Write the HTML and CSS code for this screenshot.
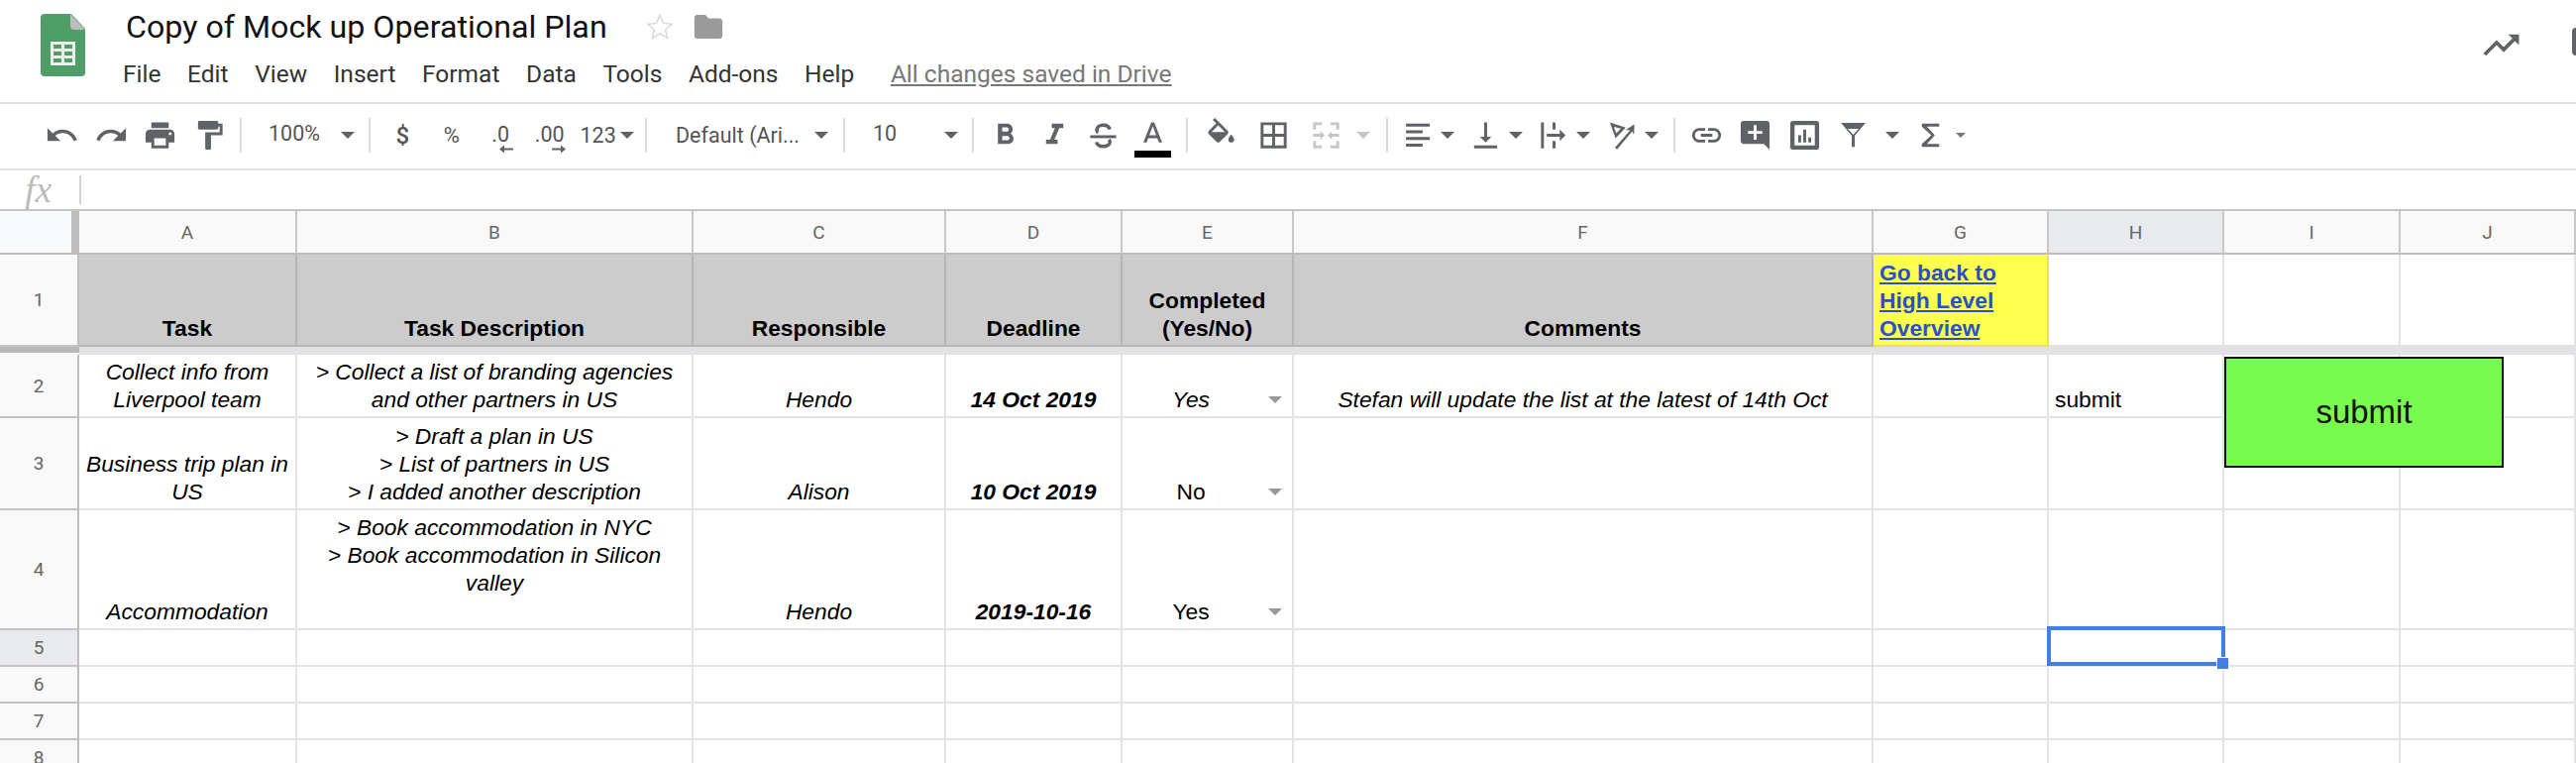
FILE: index.html
```html
<!DOCTYPE html>
<html lang="en">
<head>
<meta charset="utf-8">
<title>Copy of Mock up Operational Plan</title>
<link rel="stylesheet" href="styles.css">
</head>
<body>
<header class="appbar">
  <svg class="logo" viewBox="0 0 45 63"><path fill="#4f9e68" d="M4 0h27l14 15v44a4 4 0 0 1-4 4H4a4 4 0 0 1-4-4V4a4 4 0 0 1 4-4z"/><path fill="#bdbdbd" d="M30 0l15 16H34a4 4 0 0 1-4-4z"/><rect fill="#eeeeee" x="10" y="28" width="25" height="24"/><path fill="#4f9e68" d="M13 31h8v4h-8zM24 31h8v4h-8zM13 38h8v4h-8zM24 38h8v4h-8zM13 45h8v4h-8zM24 45h8v4h-8z"/></svg>
  <div class="titles">
    <div class="titlerow">
      <span class="doc-title">Copy of Mock up Operational Plan</span>
      <svg class="star" viewBox="0 0 24 24"><path fill="none" stroke="#d8d8d8" stroke-width="1.100" d="M12 3.300l2.600 6 6.500.6-4.900 4.300 1.500 6.400-5.700-3.400-5.700 3.400 1.500-6.400-4.900-4.300 6.500-.6z"/></svg>
      <svg class="folder" viewBox="0 0 24 24"><path fill="#9a9a9a" d="M10 3.500H4c-1.100 0-2 .9-2 2v13c0 1.100.9 2 2 2h16c1.100 0 2-.9 2-2V8c0-1.100-.9-2-2-2h-8l-2-2.500z"/></svg>
    </div>
    <nav class="menu">
      <span>File</span><span>Edit</span><span>View</span><span>Insert</span><span>Format</span><span>Data</span><span>Tools</span><span>Add-ons</span><span>Help</span>
      <span class="saved">All changes saved in Drive</span>
    </nav>
  </div>
  <svg class="trend" viewBox="0 0 24 24"><path fill="#5f6368" d="M16 6l2.290 2.290-4.880 4.880-4-4L2 16.590 3.410 18l6-6 4 4 6.300-6.290L22 12V6z"/></svg>
  <div class="stub"></div>
</header>

<div class="toolbar">
  <div class="tg g1">
    <span class="tb"><svg viewBox="0 0 24 24"><path d="M12.500 8c-2.650 0-5.050.99-6.900 2.600L2 7v9h9l-3.620-3.620c1.390-1.160 3.160-1.880 5.120-1.880 3.540 0 6.550 2.310 7.600 5.500l2.370-.78C21.080 11.030 17.150 8 12.500 8z"/></svg></span>
    <span class="tb"><svg viewBox="0 0 24 24"><path d="M18.400 10.600C16.550 8.990 14.150 8 11.500 8c-4.650 0-8.580 3.030-9.960 7.220L3.900 16c1.050-3.190 4.050-5.500 7.600-5.500 1.950 0 3.730.72 5.120 1.880L13 16h9V7l-3.600 3.600z"/></svg></span>
    <span class="tb"><svg viewBox="0 0 24 24"><path d="M19 8H5c-1.660 0-3 1.340-3 3v6h4v4h12v-4h4v-6c0-1.660-1.340-3-3-3zm-3 11H8v-5h8v5zm3-7c-.55 0-1-.45-1-1s.45-1 1-1 1 .45 1 1-.45 1-1 1zm-1-9H6v4h12V3z"/></svg></span>
    <span class="tb"><svg viewBox="0 0 24 24"><path d="M18 4V3c0-.55-.45-1-1-1H5c-.55 0-1 .45-1 1v4c0 .55.45 1 1 1h12c.55 0 1-.45 1-1V6h1v4H9v11c0 .55.45 1 1 1h2c.55 0 1-.45 1-1v-9h8V4h-3z"/></svg></span>
  </div>
  <i class="tsep"></i>
  <div class="tg g2"><span class="ttext up">100%</span><i class="arrow push"></i></div>
  <i class="tsep"></i>
  <div class="tg g3">
    <span class="tb ttext strong">$</span>
    <span class="tb ttext pct">%</span>
    <span class="tb stack"><span class="ttext">.0</span><svg class="dec dec1" viewBox="0 0 14 8"><path d="M14 3H5V0L0 4l5 4V5h9z"/></svg></span>
    <span class="tb stack"><span class="ttext">.00</span><svg class="dec dec2" viewBox="0 0 14 8"><path d="M0 3h9V0l5 4-5 4V5H0z"/></svg></span>
    <span class="ttext num">123</span><i class="arrow gap4"></i>
  </div>
  <i class="tsep"></i>
  <div class="tg g4"><span class="ttext">Default (Ari...</span><i class="arrow push"></i></div>
  <i class="tsep"></i>
  <div class="tg g5"><span class="ttext up">10</span><i class="arrow push"></i></div>
  <i class="tsep"></i>
  <div class="tg g6">
    <span class="tb"><svg viewBox="0 0 24 24"><path d="M15.600 10.790c.97-.67 1.650-1.770 1.650-2.790 0-2.260-1.750-4-4-4H7v14h7.040c2.090 0 3.710-1.700 3.710-3.790 0-1.520-.86-2.820-2.150-3.420zM10 6.500h3c.83 0 1.500.67 1.500 1.500s-.67 1.500-1.500 1.500h-3v-3zm3.500 9H10v-3h3.500c.83 0 1.500.67 1.500 1.500s-.67 1.500-1.500 1.500z"/></svg></span>
    <span class="tb"><svg viewBox="0 0 24 24"><path d="M10 4v3h2.210l-3.420 8H6v3h8v-3h-2.210l3.420-8H18V4z"/></svg></span>
    <span class="tb"><svg viewBox="0 0 24 24"><path class="line" d="M16.500 8c-.4-1.800-2.200-3-4.500-3-2.600 0-4.500 1.300-4.500 3.200 0 .8.300 1.500 1 2M16 15c.4.500.6 1 .6 1.600 0 1.900-2 3.100-4.600 3.100-2.500 0-4.300-1.200-4.700-3"/><path d="M3 12h18v2H3z"/></svg></span>
    <span class="tb"><svg viewBox="0 0 24 24"><path d="M11 3L5.500 17h2.250l1.120-3h6.250l1.120 3h2.250L13 3h-2zm-1.380 9L12 5.670 14.380 12H9.620z"/></svg><i class="colorbar"></i></span>
  </div>
  <i class="tsep"></i>
  <div class="tg g7">
    <span class="tb wide"><svg viewBox="0 0 24 24"><path d="M16.560 8.940L7.620 0 6.210 1.410l2.380 2.380-5.150 5.150c-.59.59-.59 1.540 0 2.120l5.500 5.500c.29.29.68.44 1.060.44s.77-.15 1.060-.44l5.500-5.500c.59-.58.59-1.530 0-2.120zM5.210 10L10 5.210 14.790 10H5.210zM19 11.500s-2 2.170-2 3.500c0 1.100.9 2 2 2s2-.9 2-2c0-1.330-2-3.500-2-3.500z"/><path d="M4 10h12l-6 6z"/></svg></span>
    <span class="tb wide"><svg viewBox="0 0 24 24"><path d="M3 3v18h18V3H3zm8 16H5v-6h6v6zm0-8H5V5h6v6zm8 8h-6v-6h6v6zm0-8h-6V5h6v6z"/></svg></span>
    <span class="tb wide off"><svg viewBox="0 0 24 24"><path d="M3 3h6v2H5v3H3zM3 16h2v3h4v2H3zM21 3h-6v2h4v3h2zM21 16h-2v3h-4v2h6zM3 11h5V9l3 3-3 3v-2H3zM21 11h-5V9l-3 3 3 3v-2h5z"/></svg></span>
    <i class="arrow off push"></i>
  </div>
  <i class="tsep"></i>
  <div class="tg g8">
    <span class="pair"><span class="tb nar"><svg viewBox="0 0 24 24"><path d="M3.500 4h16.500v2H3.500zM3.500 8.600H15v2H3.500zM3.500 13.200h16.500v2H3.500zM3.500 17.800H15v2H3.500z"/></svg></span><i class="arrow"></i></span>
    <span class="pair"><span class="tb nar"><svg viewBox="0 0 24 24"><path d="M16 13h-3V3h-2v10H8l4 4 4-4zM4 19v2h16v-2H4z"/></svg></span><i class="arrow"></i></span>
    <span class="pair"><span class="tb nar"><svg viewBox="0 0 24 24"><path d="M3 3h2v18H3zM11 3h2v5h-2zM11 16h2v5h-2zM7 11h9V8l4 4-4 4v-3H7z"/></svg></span><i class="arrow"></i></span>
    <span class="pair"><span class="tb nar"><svg viewBox="0 0 24 24"><path d="M4 3l11 3.600-7 7.400zM6.800 6.200l1.700 4.400 3.100-3.200z" fill-rule="evenodd"/><path d="M7.500 20.500L18 8.500l-3-.3 6-3.700-.3 7.200-1.200-2.400L9 21.700z"/></svg></span><i class="arrow"></i></span>
  </div>
  <i class="tsep"></i>
  <div class="tg g9">
    <span class="tb"><svg viewBox="0 0 24 24"><path d="M3.900 12c0-1.710 1.390-3.100 3.100-3.100h4V7H7c-2.760 0-5 2.240-5 5s2.240 5 5 5h4v-1.900H7c-1.710 0-3.100-1.390-3.100-3.100zM8 13h8v-2H8v2zm9-6h-4v1.900h4c1.710 0 3.100 1.390 3.100 3.100s-1.390 3.100-3.100 3.100h-4V17h4c2.760 0 5-2.240 5-5s-2.240-5-5-5z"/></svg></span>
    <span class="tb"><svg viewBox="0 0 24 24"><path d="M21.990 4c0-1.100-.89-2-1.990-2H4c-1.100 0-2 .9-2 2v12c0 1.100.9 2 2 2h14l4 4-.01-18zM17 11h-4v4h-2v-4H7V9h4V5h2v4h4v2z"/></svg></span>
    <span class="tb"><svg viewBox="0 0 24 24"><path fill-rule="evenodd" d="M4 2h16a2 2 0 0 1 2 2v16a2 2 0 0 1-2 2H4a2 2 0 0 1-2-2V4a2 2 0 0 1 2-2zM5 5v14h14V5zM7.500 12H9.500v5H7.500zM11 8h2v9h-2zM14.500 13.500h2V17h-2z"/></svg></span>
    <span class="tb"><svg viewBox="0 0 24 24"><path fill-rule="evenodd" d="M3.500 3.500h17l-7.500 8.800v7.700h-2v-7.700zM8.300 7.500h7.400L12 11.700z"/></svg></span>
    <span class="arrowcell"><i class="arrow"></i></span>
    <span class="tb"><svg viewBox="0 0 24 24"><path d="M18 4H6v2l6.500 6L6 18v2h12v-2H9.500l5.500-6-5.500-6H18z"/></svg></span>
    <i class="arrow tiny"></i>
  </div>
</div>

<div class="formula"><span class="fx">fx</span><i class="fsep"></i></div>

<main class="sheet">
  <div class="corner"></div>
  <div class="colh">A</div><div class="colh">B</div><div class="colh">C</div><div class="colh">D</div><div class="colh">E</div><div class="colh">F</div><div class="colh">G</div><div class="colh active">H</div><div class="colh">I</div><div class="colh">J</div>

  <div class="rowh">1</div>
  <div class="c hd">Task</div>
  <div class="c hd">Task Description</div>
  <div class="c hd">Responsible</div>
  <div class="c hd">Deadline</div>
  <div class="c hd">Completed<br>(Yes/No)</div>
  <div class="c hd">Comments</div>
  <div class="c back"><a href="#">Go back to High Level Overview</a></div>
  <div class="c"></div><div class="c"></div><div class="c"></div>

  <div class="freeze-h"></div><div class="freeze"></div>

  <div class="rowh">2</div>
  <div class="c it">Collect info from Liverpool team</div>
  <div class="c it">&gt; Collect a list of branding agencies and other partners in US</div>
  <div class="c it">Hendo</div>
  <div class="c date">14 Oct 2019</div>
  <div class="c pick it">Yes<i class="drop"></i></div>
  <div class="c it">Stefan will update the list at the latest of 14th Oct</div>
  <div class="c"></div>
  <div class="c plain">submit</div>
  <div class="c"></div><div class="c"></div>

  <div class="rowh">3</div>
  <div class="c it">Business trip plan in US</div>
  <div class="c it">&gt; Draft a plan in US<br>&gt; List of partners in US<br>&gt; I added another description</div>
  <div class="c it">Alison</div>
  <div class="c date">10 Oct 2019</div>
  <div class="c pick">No<i class="drop"></i></div>
  <div class="c"></div><div class="c"></div><div class="c"></div><div class="c"></div><div class="c"></div>

  <div class="rowh">4</div>
  <div class="c it">Accommodation</div>
  <div class="c it top">&gt; Book accommodation in NYC<br>&gt; Book accommodation in Silicon valley</div>
  <div class="c it">Hendo</div>
  <div class="c date">2019-10-16</div>
  <div class="c pick">Yes<i class="drop"></i></div>
  <div class="c"></div><div class="c"></div><div class="c"></div><div class="c"></div><div class="c"></div>

  <div class="rowh active">5</div>
  <div class="c"></div><div class="c"></div><div class="c"></div><div class="c"></div><div class="c"></div><div class="c"></div><div class="c"></div><div class="c"></div><div class="c"></div><div class="c"></div>
  <div class="rowh">6</div>
  <div class="c"></div><div class="c"></div><div class="c"></div><div class="c"></div><div class="c"></div><div class="c"></div><div class="c"></div><div class="c"></div><div class="c"></div><div class="c"></div>
  <div class="rowh">7</div>
  <div class="c"></div><div class="c"></div><div class="c"></div><div class="c"></div><div class="c"></div><div class="c"></div><div class="c"></div><div class="c"></div><div class="c"></div><div class="c"></div>
  <div class="rowh">8</div>
  <div class="c"></div><div class="c"></div><div class="c"></div><div class="c"></div><div class="c"></div><div class="c"></div><div class="c"></div><div class="c"></div><div class="c"></div><div class="c"></div>

  <div class="drawing">submit</div>
  <div class="selection"><i class="handle"></i></div>
</main>
</body>
</html>
```
FILE: styles.css
```css
* { box-sizing: border-box; }
html, body { margin: 0; height: 770px; overflow: hidden; background: #fff; }
body { font-family: "Liberation Sans", Arial, sans-serif; color: #000; }

/* App bar */
.appbar { display: flex; align-items: flex-start; height: 105px; padding-left: 41px; border-bottom: 2px solid #e0e1e5; }
.logo { width: 45px; height: 63px; margin-top: 14px; flex: none; }
.titles { margin-left: 39px; padding-top: 9px; }
.titlerow { display: flex; align-items: center; height: 36px; }
.doc-title { font: 400 32.2px/36px Roboto, sans-serif; color: #111; margin-left: 2px; }
.star { width: 32px; height: 32px; margin-left: 37px; }
.folder { width: 34px; height: 34px; margin-left: 16px; }
.menu { display: flex; gap: 26.6px; margin: 15px 0 0 -1px; font: 400 24.5px/30px Roboto, sans-serif; color: #333; }
.saved { color: #777; text-decoration: underline; margin-left: 10px; }
.trend { width: 43px; height: 43px; margin: 24px 0 0 auto; flex: none; }
.stub { width: 4px; height: 28px; margin: 28px 0 0 50px; flex: none; background: #5f6368; border-radius: 4px 0 0 4px; }

/* Toolbar */
.toolbar { display: flex; align-items: center; height: 67px; padding-left: 38px; padding-bottom: 2px; border-bottom: 2px solid #e0e1e5; }
.tg { display: flex; align-items: center; flex: none; height: 100%; }
.tsep { flex: none; width: 2px; height: 35px; background: #dcdde0; }
.g1 { width: 204px; }
.g2 { width: 128px; padding: 0 14px 0 27px; }
.g3 { width: 277px; padding-left: 7.5px; }
.g4 { width: 198px; padding: 0 15px 0 29px; }
.g5 { width: 128px; padding: 0 14px 0 28px; }
.g6 { width: 214px; padding-left: 7px; }
.g7 { width: 200px; padding: 0 16px 0 6.5px; }
.g8 { width: 288px; padding-left: 8.5px; }
.g9 { padding-left: 6.5px; }
.tb { position: relative; flex: none; width: 49.5px; display: flex; align-items: center; justify-content: center; }
.tb svg { width: 35px; height: 35px; fill: #5f6368; }
.tb .line { fill: none; stroke: #5f6368; stroke-width: 2.4; }
.tb.wide { width: 53px; }
.tb.nar { width: 43px; }
.tb.off svg { fill: #c4c6ca; }
.ttext { font: 400 21.5px/26px Roboto, sans-serif; color: #555; }
.ttext.up { margin-top: -4px; }
.ttext.strong { font-weight: 500; font-size: 24px; }
.ttext.pct { font-size: 22px; }
.ttext.num { margin-left: 6px; }
.stack { flex-direction: column; justify-content: flex-start; height: 44px; }
.stack .ttext { margin-top: 8px; }
.tb svg.dec { width: 14px; height: 9px; margin-top: -3px; }
.tb svg.dec1 { margin-left: 11px; }
.tb svg.dec2 { margin-left: 18px; }
.arrow { display: block; flex: none; width: 0; height: 0; border-left: 7px solid transparent; border-right: 7px solid transparent; border-top: 7.5px solid #5f6368; }
.arrow.push { margin-left: auto; }
.arrow.off { border-top-color: #c4c6ca; }
.arrow.gap4 { margin-left: 4px; }
.arrow.tiny { border-left-width: 5px; border-right-width: 5px; border-top-width: 5px; border-top-color: #777; margin-left: 1px; }
.pair { display: flex; align-items: center; width: 68.5px; flex: none; }
.pair .arrow { margin-left: 1.5px; }
.arrowcell { width: 28px; flex: none; padding-left: 7.5px; }
.colorbar { position: absolute; left: 6px; bottom: -5px; width: 37px; height: 7px; background: #000; }

/* Formula bar */
.formula { display: flex; align-items: center; height: 41px; border-bottom: 2px solid #c4c4c4; }
.fx { width: 80px; padding-left: 25px; font: italic 400 38px/39px "Liberation Serif", serif; color: #bcbcbc; }
.fsep { width: 2px; height: 29px; background: #d4d4d4; }

/* Sheet */
.sheet {
  position: relative;
  display: grid;
  grid-template-columns: 80px 220px 400px 255px 178px 173px 585px 177px 177px 178px 177px;
  grid-template-rows: 44px 93px 8px 64px 93px 121px 37px 37px 37px 37px;
  width: 2600px;
}
.corner { background: #f8f9fa; border-right: 8px solid #bdbdbd; border-bottom: 2px solid #bdbdbd; }
.colh, .rowh { display: flex; align-items: center; justify-content: center; background: #f8f9f8; color: #666; font: 400 19px Roboto, sans-serif; }
.colh { border-right: 2px solid #c8c8c8; border-bottom: 2px solid #bdbdbd; padding-top: 1px; }
.rowh { border-right: 2px solid #bdbdbd; border-bottom: 2px solid #c4c4c4; }
.colh.active, .rowh.active { background: #e8eaed; }
.c { display: flex; flex-direction: column; justify-content: flex-end; padding: 0 6px 3px; text-align: center; font-size: 22.8px; line-height: 28px; border-right: 2px solid #e4e4e4; border-bottom: 2px solid #e4e4e4; }
.hd { background: #cccccc; font-weight: 700; border-color: #b5b5b5; }
.it { font-style: italic; }
.date { font-style: italic; font-weight: 700; }
.top { justify-content: flex-start; padding-top: 3px; }
.plain { text-align: left; }
.pick { position: relative; padding-right: 39px; }
.drop { position: absolute; right: 10px; bottom: 13px; width: 0; height: 0; border-left: 7px solid transparent; border-right: 7px solid transparent; border-top: 7px solid #999; }
.back { background: #ffff4f; border-color: #e6e64c; font-weight: 700; text-align: left; }
.back a { color: #2a50c8; text-decoration: underline; }
.freeze-h { background: #b9b9b9; border-bottom: 2px solid #f8f9f8; }
.freeze { grid-column: 2 / -1; background: #dfe1e5; }
.drawing { position: absolute; left: 2245px; top: 147px; width: 282px; height: 112px; display: flex; align-items: center; justify-content: center; background: #76fb4e; border: 2px solid #111; font-size: 33px; color: #111; }
.selection { position: absolute; left: 2066px; top: 419px; width: 180px; height: 40px; border: 4px solid #437fe0; }
.handle { position: absolute; right: -8px; bottom: -8px; width: 13px; height: 13px; background: #437fe0; border: 1px solid #fff; }
```
